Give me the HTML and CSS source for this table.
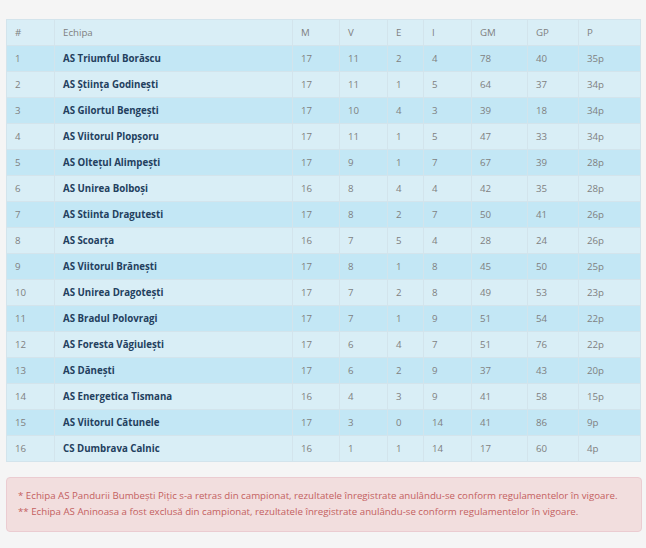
FILE: index.html
```html
<!DOCTYPE html>
<html lang="ro">
<head>
<meta charset="utf-8">
<link rel="stylesheet" href="styles.css">
</head>
<body>
<div class="page">
<table class="standings">
<colgroup>
<col class="c-pos"><col class="c-team"><col class="c-m"><col class="c-v"><col class="c-e"><col class="c-i"><col class="c-gm"><col class="c-gp"><col class="c-p">
</colgroup>
<thead>
<tr><th>#</th><th>Echipa</th><th>M</th><th>V</th><th>E</th><th>I</th><th>GM</th><th>GP</th><th>P</th></tr>
</thead>
<tbody>
<tr><td>1</td><td class="team">AS Triumful Borăscu</td><td>17</td><td>11</td><td>2</td><td>4</td><td>78</td><td>40</td><td>35p</td></tr>
<tr><td>2</td><td class="team">AS Ştiinţa Godineşti</td><td>17</td><td>11</td><td>1</td><td>5</td><td>64</td><td>37</td><td>34p</td></tr>
<tr><td>3</td><td class="team">AS Gilortul Bengeşti</td><td>17</td><td>10</td><td>4</td><td>3</td><td>39</td><td>18</td><td>34p</td></tr>
<tr><td>4</td><td class="team">AS Viitorul Plopşoru</td><td>17</td><td>11</td><td>1</td><td>5</td><td>47</td><td>33</td><td>34p</td></tr>
<tr><td>5</td><td class="team">AS Olteţul Alimpeşti</td><td>17</td><td>9</td><td>1</td><td>7</td><td>67</td><td>39</td><td>28p</td></tr>
<tr><td>6</td><td class="team">AS Unirea Bolboşi</td><td>16</td><td>8</td><td>4</td><td>4</td><td>42</td><td>35</td><td>28p</td></tr>
<tr><td>7</td><td class="team">AS Stiinta Dragutesti</td><td>17</td><td>8</td><td>2</td><td>7</td><td>50</td><td>41</td><td>26p</td></tr>
<tr><td>8</td><td class="team">AS Scoarţa</td><td>16</td><td>7</td><td>5</td><td>4</td><td>28</td><td>24</td><td>26p</td></tr>
<tr><td>9</td><td class="team">AS Viitorul Brăneşti</td><td>17</td><td>8</td><td>1</td><td>8</td><td>45</td><td>50</td><td>25p</td></tr>
<tr><td>10</td><td class="team">AS Unirea Dragoteşti</td><td>17</td><td>7</td><td>2</td><td>8</td><td>49</td><td>53</td><td>23p</td></tr>
<tr><td>11</td><td class="team">AS Bradul Polovragi</td><td>17</td><td>7</td><td>1</td><td>9</td><td>51</td><td>54</td><td>22p</td></tr>
<tr><td>12</td><td class="team">AS Foresta Văgiuleşti</td><td>17</td><td>6</td><td>4</td><td>7</td><td>51</td><td>76</td><td>22p</td></tr>
<tr><td>13</td><td class="team">AS Dăneşti</td><td>17</td><td>6</td><td>2</td><td>9</td><td>37</td><td>43</td><td>20p</td></tr>
<tr><td>14</td><td class="team">AS Energetica Tismana</td><td>16</td><td>4</td><td>3</td><td>9</td><td>41</td><td>58</td><td>15p</td></tr>
<tr><td>15</td><td class="team">AS Viitorul Cătunele</td><td>17</td><td>3</td><td>0</td><td>14</td><td>41</td><td>86</td><td>9p</td></tr>
<tr><td>16</td><td class="team">CS Dumbrava Calnic</td><td>16</td><td>1</td><td>1</td><td>14</td><td>17</td><td>60</td><td>4p</td></tr>
</tbody>
</table>
<div class="alert">
<p>* Echipa AS Pandurii Bumbeşti Piţic s-a retras din campionat, rezultatele înregistrate anulându-se conform regulamentelor în vigoare.</p>
<p>** Echipa AS Aninoasa a fost exclusă din campionat, rezultatele înregistrate anulându-se conform regulamentelor în vigoare.</p>
</div>
</div>
</body>
</html>
```

FILE: styles.css
```css
html, body {
  margin: 0;
  padding: 0;
  background: #f5f5f5;
}
body {
  font-family: "Open Sans", "Liberation Sans", sans-serif;
  font-size: 9.7px;
  color: #7f7f7f;
}
.page {
  padding: 19px 5px 0 6px;
  width: 635px;
}
.standings {
  width: 634px;
  border-collapse: collapse;
  table-layout: fixed;
  border: 1px solid #dde3e6;
}
.c-pos { width: 48px; }
.c-team { width: 238px; }
.c-m { width: 47px; }
.c-v { width: 48px; }
.c-e { width: 36px; }
.c-i { width: 48px; }
.c-gm { width: 56px; }
.c-gp { width: 51px; }
.c-p { width: 62px; }
.standings th,
.standings td {
  height: 25px;
  padding: 0 8px;
  text-align: left;
  font-weight: normal;
  border: 1px solid #d3e4ec;
  white-space: nowrap;
}
.standings thead tr,
.standings tbody tr:nth-child(even) {
  background: #d9eef6;
}
.standings tbody tr:nth-child(odd) {
  background: #c3e7f5;
}
.standings td.team {
  font-weight: bold;
  color: #23405e;
}
.alert {
  margin-top: 15px;
  background: #f2dede;
  border: 1px solid #ebccd1;
  border-radius: 4px;
  color: #c4605f;
  padding: 10px 11px 11px;
  width: 612px;
}
.alert p {
  margin: 0;
  line-height: 16px;
  white-space: nowrap;
}
```
